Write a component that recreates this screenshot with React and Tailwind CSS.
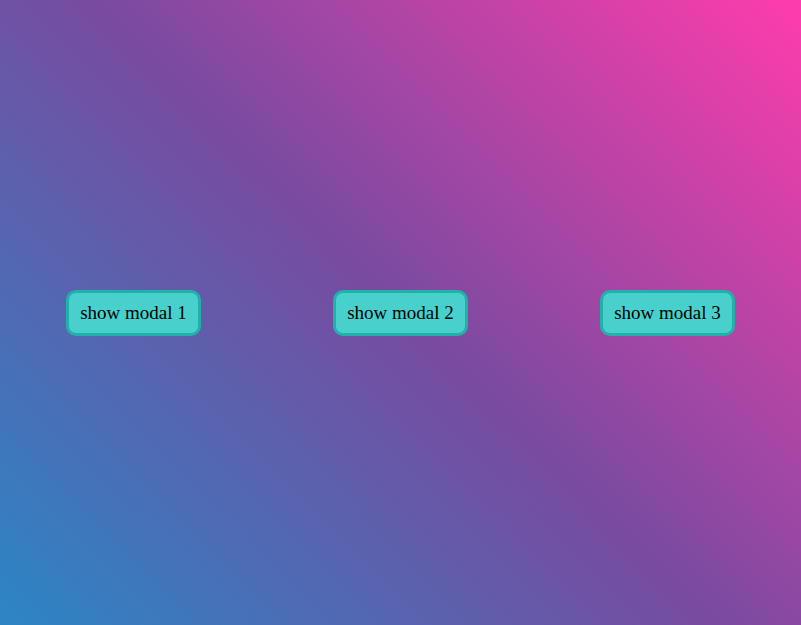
import React from 'react';

const buttons = ['show modal 1', 'show modal 2', 'show modal 3'];

export default function App() {
  return (
    <div className="flex h-screen w-full items-center justify-around bg-[linear-gradient(225deg,#FF3CAC_0%,#784BA0_50%,#2B86C5_100%)] font-['Georgia','Liberation_Serif',serif]">
      {buttons.map((label) => (
        <button
          key={label}
          className="rounded-[10px] border-[3px] border-[#20b2aa] bg-[#48d1cc] px-[11px] py-[10px] text-[19px] leading-[20px] text-black"
        >
          {label}
        </button>
      ))}
    </div>
  );
}
